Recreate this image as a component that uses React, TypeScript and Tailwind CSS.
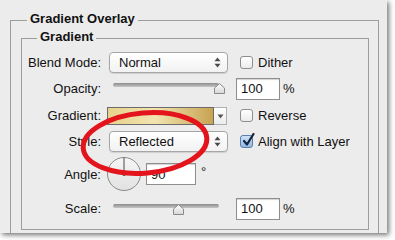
import React from "react";

const Label = ({ children }: { children: React.ReactNode }) => (
  <div className="w-[79px] shrink-0 text-right">{children}</div>
);

function UpDown() {
  return (
    <svg width="7" height="11" viewBox="0 0 7 11">
      <path d="M3.5 0.5 L6.5 4.2 H0.5 Z" fill="#4a4a4a" />
      <path d="M0.5 6.8 H6.5 L3.5 10.5 Z" fill="#4a4a4a" />
    </svg>
  );
}

function Select({ value }: { value: string }) {
  return (
    <div className="ml-[8px] flex h-[21px] w-[119px] shrink-0 items-center justify-between rounded-[4px] border border-[#a6a6a6] bg-gradient-to-b from-white to-[#f2f2f2] pl-[9px] pr-[6px] shadow-[0_1px_1px_rgba(0,0,0,0.12)]">
      <span>{value}</span>
      <UpDown />
    </div>
  );
}

function Checkbox({ checked, label, ml }: { checked?: boolean; label: string; ml: string }) {
  return (
    <div className={"flex items-center " + ml}>
      <div
        className={
          "relative h-[13px] w-[13px] shrink-0 rounded-[3px] border " +
          (checked
            ? "border-[#5a7fae] bg-gradient-to-b from-[#cfe3f7] to-[#8fb8e4]"
            : "border-[#8e8e8e] bg-gradient-to-b from-white to-[#ebebeb]")
        }
      >
        {checked && (
          <svg className="absolute left-[1px] top-[-3px]" width="13" height="14" viewBox="0 0 13 14">
            <path d="M2 8 L5 11.5 L11.5 1" fill="none" stroke="#15233d" strokeWidth="2.2" strokeLinecap="round" strokeLinejoin="round" />
          </svg>
        )}
      </div>
      <span className="ml-[5px]">{label}</span>
    </div>
  );
}

function Slider({ thumb, trackTop }: { thumb: number; trackTop: string }) {
  return (
    <div className="relative ml-[12px] h-[12px] w-[115px] shrink-0">
      <div className={"absolute left-0 h-[4px] w-[106px] rounded-full bg-gradient-to-b from-[#8c8c8c] to-[#c6c6c6] " + trackTop} />
      <svg className={"absolute " + trackTop} style={{ left: thumb }} width="11" height="11" viewBox="0 0 11 11">
        <defs>
          <linearGradient id={"tg" + thumb} x1="0" y1="0" x2="0" y2="1">
            <stop offset="0" stopColor="#ffffff" />
            <stop offset="1" stopColor="#d6d6d6" />
          </linearGradient>
        </defs>
        <path d="M0.5 10.5 V5 L5.5 0.6 L10.5 5 V10.5 Z" fill={"url(#tg" + thumb + ")"} stroke="#8a8a8a" />
      </svg>
    </div>
  );
}

function NumBox({ value, ml, w }: { value: string; ml: string; w: string }) {
  return (
    <div className={"flex h-[22px] shrink-0 items-center border border-[#8e8e8e] bg-white pl-[4px] shadow-[inset_0_1px_1px_rgba(0,0,0,0.18)] " + ml + " " + w}>
      {value}
    </div>
  );
}

export default function App() {
  return (
    <div className="min-h-screen bg-white">
      <div
        className="relative h-[233px] w-[387px] overflow-hidden bg-[#ececec] pl-[10px] pr-[8px] pt-[11px] text-[13px] leading-[15px] text-[#111] shadow-[2px_2px_5px_rgba(0,0,0,0.55)]"
        style={{ fontFamily: '"Liberation Sans", Arial, sans-serif' }}
      >
        <fieldset className="h-[240px] border border-[#9d9d9d] pl-[10px] pr-[9px]">
          <legend className="ml-[6px] px-[3px] pb-[4px] text-[13px] font-bold leading-[15px]">Gradient Overlay</legend>
          <fieldset className="-mt-[1px] h-[201px] border border-[#9d9d9d]">
            <legend className="ml-[15px] px-[3px] pb-[4px] text-[13px] font-bold leading-[15px]">Gradient</legend>

            <div className="mt-[2px] flex h-[25px] items-center">
              <Label>Blend Mode:</Label>
              <Select value="Normal" />
              <Checkbox label="Dither" ml="ml-[12px]" />
            </div>

            <div className="flex h-[27px] items-center">
              <Label>Opacity:</Label>
              <Slider thumb={101} trackTop="top-0" />
              <NumBox value="100" ml="ml-[8px]" w="w-[44px]" />
              <span className="ml-[3px]">%</span>
            </div>

            <div className="flex h-[26px] items-center">
              <Label>Gradient:</Label>
              <div className="ml-[6px] mt-[2px] flex h-[18px] w-[120px] shrink-0">
                <div className="flex-1 border border-[#6b6b6b] bg-[linear-gradient(to_right,#e7d28c,#f2e4b0_45%,#c8a352)]" />
                <div className="flex w-[13px] items-center justify-center border border-l-0 border-[#b0b0b0] bg-gradient-to-b from-white to-[#ececec]">
                  <svg width="7" height="5" viewBox="0 0 7 5">
                    <path d="M0.5 0.5 H6.5 L3.5 4.5 Z" fill="#555" />
                  </svg>
                </div>
              </div>
              <Checkbox label="Reverse" ml="ml-[13px]" />
            </div>

            <div className="flex h-[27px] items-center">
              <Label>Style:</Label>
              <Select value="Reflected" />
              <Checkbox checked label="Align with Layer" ml="ml-[12px]" />
            </div>

            <div className="flex h-[38px] items-center">
              <Label>Angle:</Label>
              <svg className="ml-[6px] shrink-0" width="34" height="34" viewBox="0 0 34 34">
                <defs>
                  <linearGradient id="dial" x1="0" y1="0" x2="0" y2="1">
                    <stop offset="0" stopColor="#f6f6f6" />
                    <stop offset="1" stopColor="#e1e1e1" />
                  </linearGradient>
                </defs>
                <circle cx="17" cy="17" r="16.5" fill="url(#dial)" stroke="#8a8a8a" />
                <line x1="17" y1="17" x2="17" y2="0.5" stroke="#4a4a4a" strokeWidth="1" />
                <circle cx="17" cy="17.5" r="1.6" fill="#555" />
              </svg>
              <NumBox value="90" ml="ml-[5px]" w="w-[50px]" />
              <span className="ml-[5px] self-start pt-[9px]">°</span>
            </div>

            <div className="flex h-[31px] items-center">
              <Label>Scale:</Label>
              <Slider thumb={60} trackTop="top-[1px]" />
              <NumBox value="100" ml="ml-[8px]" w="w-[44px]" />
              <span className="ml-[3px]">%</span>
            </div>
          </fieldset>
        </fieldset>

        <svg className="pointer-events-none absolute left-0 top-0" width="387" height="233" viewBox="0 0 387 233">
          <ellipse cx="145" cy="143" rx="62" ry="30" transform="rotate(-5 145 143)" fill="none" stroke="#e3141c" strokeWidth="5" />
        </svg>
      </div>
    </div>
  );
}
